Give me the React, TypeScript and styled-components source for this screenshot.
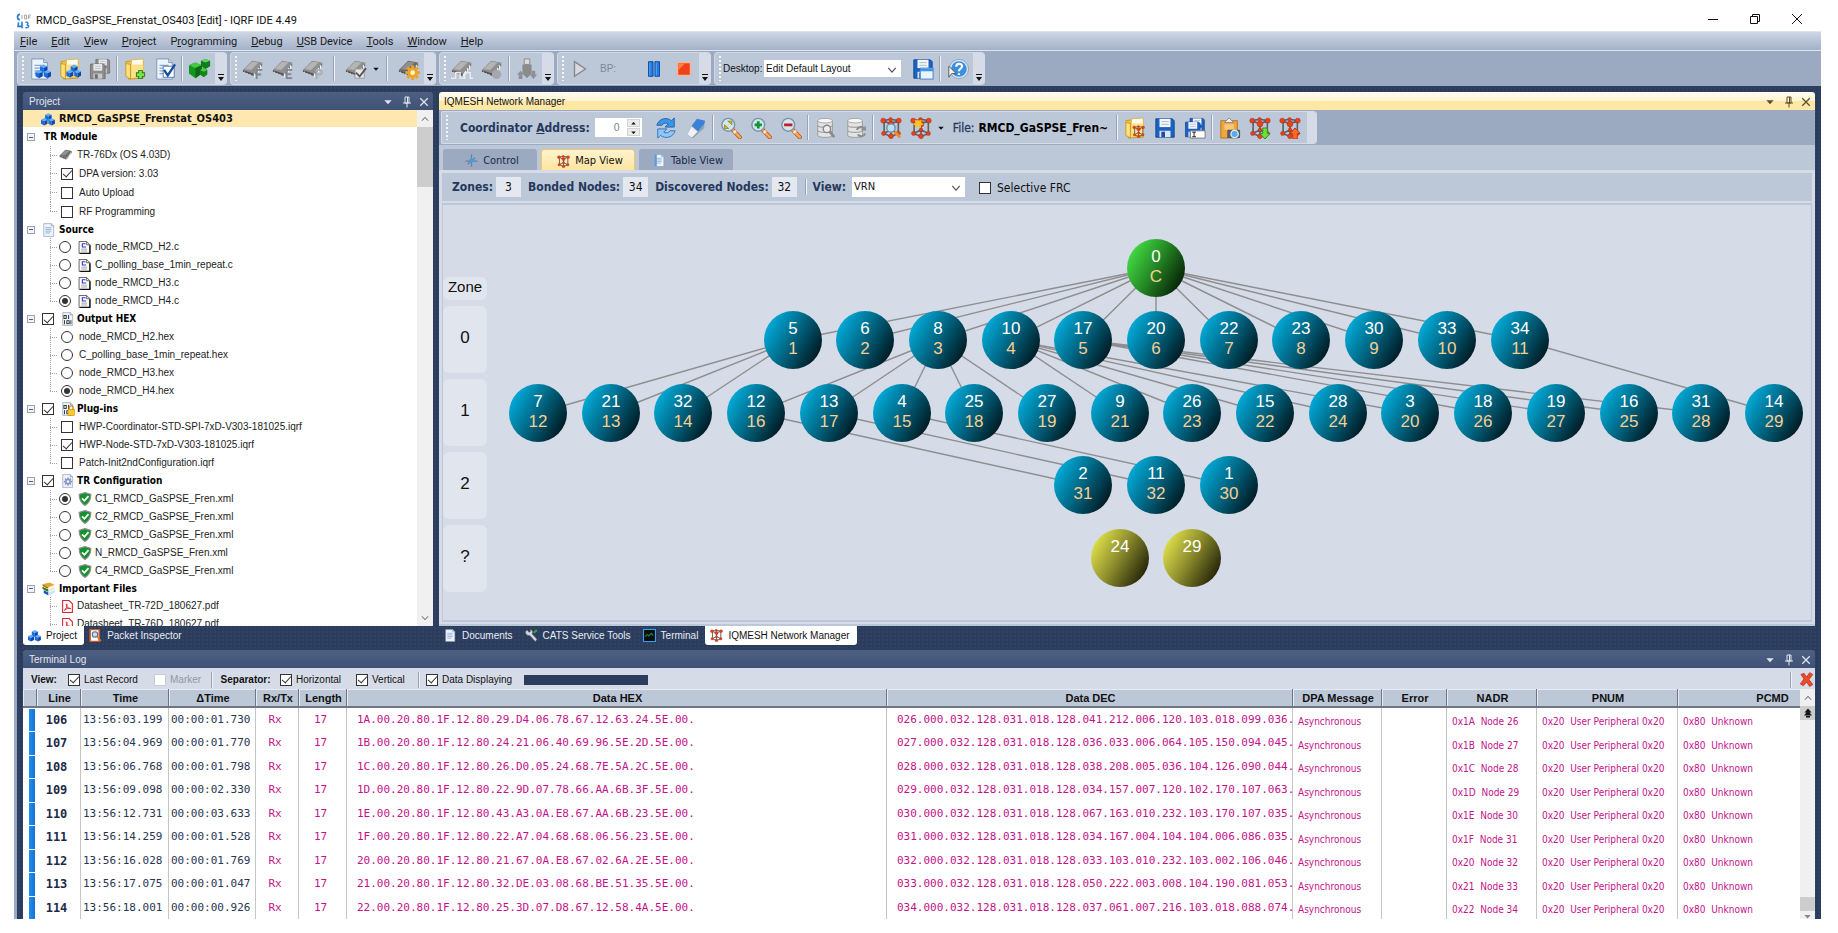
import React from 'react';
import styled, { createGlobalStyle, css } from 'styled-components';

const SANS = '"Liberation Sans", Arial, sans-serif';
const CONDENSED = '"DejaVu Sans Condensed", Tahoma, sans-serif';
const MONO = '"DejaVu Sans Mono", monospace';

const GlobalStyle = createGlobalStyle`
  * { box-sizing: border-box; }
  body { margin: 0; background: #fff; font: 10px/12px ${SANS}; color: #111; }
  button, input, select { font: inherit; color: inherit; margin: 0; }
  button { border: 0; padding: 0; background: none; }
`;

/* ------------------------------------------------------------------ icons */

const Drawing = styled.svg`flex: none;`;
type IconProps = { size?: number; children?: React.ReactNode };
const Icon = ({ size = 24, children }: IconProps) => (
  <Drawing width={size} height={size} viewBox="0 0 24 24" aria-hidden="true">{children}</Drawing>
);

const Cubes = ({ x = 0, y = 0, s = 1 }) => {
  const one = (cx: number, cy: number) => (
    <g key={`${cx}-${cy}`}>
      <path d={`M${cx} ${cy + 2}l4-2 4 2-4 2z`} fill="#5cb0fa" />
      <path d={`M${cx} ${cy + 2}l4 2v5l-4-2z`} fill="#1a6be0" />
      <path d={`M${cx + 8} ${cy + 2}l-4 2v5l4-2z`} fill="#0c47b0" />
    </g>
  );
  return <g transform={`translate(${x} ${y}) scale(${s})`}>{one(5, 0)}{one(0, 6)}{one(9, 6)}</g>;
};

const Sheet = ({ lines = false }) => (
  <g>
    <path d="M3 1h13l4 4v18H3z" fill="#eef4fb" stroke="#7d93b3" />
    <path d="M16 1v4h4" fill="#c7d6ea" stroke="#7d93b3" />
    {lines && <path d="M6 8h10M6 11h10M6 14h10M6 17h8" stroke="#8aa4cc" strokeWidth="1.4" />}
  </g>
);

const Folder = () => (
  <g>
    <path d="M2 4l7-1 2 2h10v17l-16 1z" fill="#f2c53d" stroke="#c99a1f" />
    <path d="M8 2l13-1v18l-13 3z" fill="#fffbe8" stroke="#d8b650" />
    <path d="M2 6l5 1v16l-5-3z" fill="#ffe07a" stroke="#c99a1f" />
    <path d="M8 7h13v12l-13 3z" fill="#fbe28a" />
  </g>
);

const Floppy = ({ gray = false }) => (
  <g>
    <path d="M2 2h18l2 2v18H2z" fill={gray ? '#8d8d8d' : '#1d62c0'} stroke={gray ? '#666' : '#12458e'} />
    <rect x="6" y="2" width="12" height="9" fill={gray ? '#e9e9e9' : '#f3f7fc'} />
    <path d="M8 5h8M8 8h8" stroke="#a9b6c6" />
    <rect x="6" y="15" width="12" height="7" fill={gray ? '#c9c9c9' : '#dbe7f6'} />
    <rect x="8" y="16" width="4" height="6" fill={gray ? '#6e6e6e' : '#1d4f98'} />
  </g>
);

const Chip = ({ dark = false }) => (
  <g>
    <path d="M1 13L11 3l11 2-9 12z" fill={dark ? '#6a6a6a' : '#8f8f8f'} />
    <path d="M3 12l8-8 7 1-8 8z" fill={dark ? '#909090' : '#b4b4b4'} />
    <path d="M1 13l12 4v3L1 15z" fill="#555" />
    <path d="M13 17l9-12v3l-9 12z" fill="#777" />
    <path d="M13.500 17v4M15.800 14v4.500M18 11v4.500M20.200 8v4.500" stroke="#f2f2f2" strokeWidth="1.300" />
    <path d="M3 15l-1 2M6 16.500l-1 2M9 17.500l-1 2" stroke="#cfcfcf" strokeWidth="1.200" />
  </g>
);

const Letter = ({ kind }: { kind: 'F' | 'E' | 'P' }) => (
  <g fill="none" stroke={kind === 'P' ? '#a9adb3' : '#80868f'} strokeWidth="2">
    {kind === 'F' && <path d="M16 23v-10h6M16 18h5" />}
    {kind === 'E' && <path d="M22 13h-6v9h6M16 17.500h5" />}
    {kind === 'P' && <path d="M16 23v-10h3a2.500 2.500 0 0 1 0 5h-3" />}
  </g>
);

const Magnifier = ({ mark }: { mark?: 'fit' | 'plus' | 'minus' }) => (
  <g>
    <path d="M14 14l7.500 8" stroke="#a9531b" strokeWidth="4.600" strokeLinecap="round" />
    <path d="M14 14l7.500 8" stroke="#ffa653" strokeWidth="3" strokeLinecap="round" />
    <path d="M15.500 15.500l1.500 1.500" stroke="#f4f4f4" strokeWidth="3.500" />
    <circle cx="9" cy="8.500" r="7" fill="#cfe7f3" stroke="#7f93a5" strokeWidth="1.600" />
    {mark === 'fit' && <path d="M8.500 4.500H13v4zM9.500 12.500H5v-4z" fill="#e2bd00" stroke="#8f7a00" strokeWidth=".8" />}
    {mark === 'plus' && <path d="M9 4.500v8M5 8.500h8" stroke="#16922b" strokeWidth="3" />}
    {mark === 'minus' && <path d="M4.500 8.500h9" stroke="#d0161b" strokeWidth="3" />}
  </g>
);

const Network = () => (
  <g>
    <path d="M3.500 4l8 3.500 9-3.500M4.500 4v14l7.500 3.500 8-3.500V4M12 8v13M3.500 4l8-1.500 9 1.500M4 18l8-4 8 4" stroke="#5f6267" strokeWidth="1.800" fill="none" />
    <g fill="#e8421c" stroke="#a82408" strokeWidth=".5">
      <circle cx="3.500" cy="4" r="2.700" /><circle cx="20.500" cy="4" r="2.700" /><circle cx="12" cy="7.500" r="3.200" />
      <circle cx="4" cy="18" r="2.300" /><circle cx="20" cy="18" r="2.300" /><circle cx="12" cy="21" r="2.600" />
      <circle cx="11.500" cy="2.500" r="1.900" /><circle cx="12" cy="14" r="1.900" />
    </g>
  </g>
);

const Database = ({ mode }: { mode: 'find' | 'sync' }) => (
  <g>
    <path d="M3 4v16c0 3 16 3 16 0V4z" fill="#e4e4e4" stroke="#999" />
    <ellipse cx="11" cy="4" rx="8" ry="2.500" fill="#f7f7f7" stroke="#a5a5a5" />
    <path d="M3 9c0 3 16 3 16 0M3 14.500c0 3 16 3 16 0" fill="none" stroke="#a2a2a2" strokeWidth="1.300" />
    {mode === 'find' ? (
      <g stroke="#8a8a8a"><circle cx="13" cy="13" r="4" fill="#eee" strokeWidth="1.600" /><path d="M16 16l5 6" strokeWidth="2.800" /></g>
    ) : (
      <g fill="none" stroke="#8d8d8d" strokeWidth="2.400"><path d="M13 14a4.500 4.500 0 0 1 8-1M22 18a4.500 4.500 0 0 1-8 1" /><path d="M22 10v4h-4" strokeWidth="1.600" /></g>
    )}
  </g>
);

const Shield = () => (
  <Icon size={14}>
    <path d="M12 1l10 3c0 9-3 15-10 19C5 19 2 13 2 4z" fill="#15912c" stroke="#8b8f92" strokeWidth="2" />
    <path d="M7 11l4 4 7-8" fill="none" stroke="#fff" strokeWidth="3" />
  </Icon>
);

const CFile = () => (
  <Icon size={13}>
    <path d="M2 1h14l6 6v16H2z" fill="#fff" stroke="#444" strokeWidth="1.500" />
    <path d="M22 8v15H4" fill="none" stroke="#111" strokeWidth="2.500" />
    <path d="M16 1v6h6" fill="none" stroke="#444" strokeWidth="1.500" />
    <path d="M14 5H8v6h7" fill="none" stroke="#3333c8" strokeWidth="2" />
    <path d="M6 15h11M6 18.500h11" stroke="#888" strokeWidth="1.400" />
  </Icon>
);

const Pdf = () => (
  <Icon size={13}>
    <path d="M3 1h12l6 6v16H3z" fill="#fff" stroke="#e0222a" strokeWidth="2" />
    <path d="M6 19c4-3 6-8 5-11-1-2-2 0-1 2 1 4 4 6 8 6-3-2-8 0-12 3z" fill="none" stroke="#e0222a" strokeWidth="1.800" />
  </Icon>
);

const HexFile = ({ locked = false }) => (
  <Icon size={14}>
    <Sheet />
    <g fill="none" stroke="#222" strokeWidth="1.500">
      <rect x="5" y="6" width="4" height="5" /><path d="M13 5v7M6 14v7M17 14v7" /><rect x="10" y="15" width="4" height="5" />
    </g>
    {locked && <g><rect x="12" y="13" width="11" height="10" fill="#ffc928" stroke="#c18b00" /><path d="M14 13v-3a3.500 3.500 0 0 1 7 0v3" fill="none" stroke="#c18b00" strokeWidth="1.800" /></g>}
  </Icon>
);

const gearTeeth = [0, 45, 90, 135];
const Gear = ({ cx, cy, r, fill, hole }: { cx: number; cy: number; r: number; fill: string; hole: string }) => (
  <g transform={`translate(${cx} ${cy})`}>
    {gearTeeth.map((a) => <rect key={a} x={-r / 5} y={-r} width={r / 2.5} height={r * 2} fill={fill} transform={`rotate(${a})`} />)}
    <circle r={r * 0.7} fill={fill} /><circle r={r * 0.32} fill={hole} />
  </g>
);

const Books = () => (
  <Icon size={14}>
    <path d="M1 4l12-3 9 4-11 4z" fill="#e0a72c" /><path d="M1 4l10 5v3L1 7z" fill="#a66d10" /><path d="M11 9l11-4v3l-11 4z" fill="#fff2cf" />
    <path d="M1 8l10 5v4L1 12z" fill="#2b7a2d" /><path d="M11 13l11-4v4l-11 4z" fill="#ddf0dd" />
    <path d="M3 14l8 4v5l-8-4z" fill="#1556b8" /><path d="M11 18l11-4v4l-11 5z" fill="#cfe1fb" />
  </Icon>
);

const Cross = ({ size = 10 }) => (
  <Icon size={size}><path d="M3 3l18 18M21 3L3 21" stroke="currentColor" strokeWidth="3" /></Icon>
);
const Pin = () => (
  <Icon size={12}><path d="M8 2h8v12H8zM13 2v12M4 14h16M12 14v9" fill="none" stroke="currentColor" strokeWidth="2" /></Icon>
);
const Caret = ({ size = 8 }) => (
  <Icon size={size}><path d="M1 7h22L12 19z" fill="currentColor" /></Icon>
);
const Chevron = ({ up = false, size = 10 }) => (
  <Icon size={size}><path d={up ? 'M3 17l9-10 9 10' : 'M3 7l9 10 9-10'} fill="none" stroke="#555" strokeWidth="3" /></Icon>
);

/* ----------------------------------------------------------- shared parts */

const Page = styled.div`min-height: 100vh; padding: 0 17px 14px 14px; background: #fff;`;

const TitleBar = styled.header`
  display: flex; align-items: center; height: 31px; padding: 10px 18px 0 2px; gap: 4px;
  font: 11px/20px Roboto, sans-serif;
`;
const WindowTitle = styled.h1`flex: 1; margin: 0; font-size: inherit; font-weight: 400;`;
const WindowButtons = styled.div`display: flex; gap: 30px; padding-bottom: 4px;`;
const WindowButton = styled.button`display: grid; place-items: center; width: 12px; height: 16px;`;

const MenuBar = styled.nav`
  display: flex; align-items: center; gap: 14px; height: 20px; padding: 1px 6px 0;
  background: linear-gradient(#cdd6e5, #a3b1c9); border-top: 1px solid #dde3ee; border-bottom: 1px solid #dfe5ef;
  font: 11px/18px Roboto, sans-serif;
`;
const MenuItem = styled.button`white-space: nowrap; color: #1b1b1b;`;

const ToolStrip = styled.div`
  display: flex; gap: 3px; height: 35px; padding: 1px 3px; background: #9ba9c1;
`;
const ToolGroup = styled.div`
  display: flex; align-items: center; height: 33px; overflow: hidden; padding-left: 4px;
  background: #bcc7d8; border: 1px solid #d0d8e5; border-right: 0; border-radius: 4px;
`;
const Grip = styled.span`
  flex: none; width: 3px; height: 25px;
  background: repeating-linear-gradient(#f1f4f9 0 2px, transparent 2px 4px) 0 0 / 2px 100% no-repeat;
`;
const ToolButton = styled.button<{ $narrow?: boolean }>`
  flex: none; display: grid; place-items: center; width: ${(p) => (p.$narrow ? 10 : 30)}px; height: 30px;
`;
const Separator = styled.span<{ $wide?: boolean; $tall?: number }>`
  flex: none; width: 1px; height: ${(p) => p.$tall ?? 25}px; margin: 0 ${(p) => (p.$wide ? 6 : 2)}px;
  background: #eef1f6; box-shadow: -1px 0 #97a3b8;
`;
const OverflowTab = styled.button`
  flex: none; align-self: stretch; display: flex; align-items: flex-end; justify-content: center;
  width: 12px; padding-bottom: 3px; background: #d5dbe7;
`;
const DesktopLabel = styled.label`width: 42px; padding-left: 1px; color: #111; white-space: nowrap;`;
const BreakLabel = styled.span`width: 44px; padding-left: 5px; color: #7e8796;`;
const SaveSlot = styled.span`display: flex; padding-left: 7px;`;

const SelectBox = styled.span<{ $w: number; $h: number }>`
  position: relative; flex: none; width: ${(p) => p.$w}px; height: ${(p) => p.$h}px; background: #fff;
  & > select {
    appearance: none; width: 100%; height: 100%; border: 0; border-radius: 0; background: transparent; padding: 0 2px; outline: 0;
  }
  & > svg { position: absolute; right: 4px; top: 50%; margin-top: -4px; pointer-events: none; }
`;

const Checkbox = styled.input.attrs({ type: 'checkbox' })`
  appearance: none; flex: none; display: grid; place-items: center; width: 12px; height: 12px;
  border: 1px solid #333; background: #fff;
  &:disabled { border-color: #ccc; }
  &:checked::after { content: ''; width: 4px; height: 8px; margin-top: -2px; border: solid #333; border-width: 0 1px 1px 0; transform: rotate(42deg); }
`;
const Radio = styled.input.attrs({ type: 'radio' })`
  appearance: none; flex: none; display: grid; place-items: center; width: 12px; height: 12px;
  border: 1px solid #333; border-radius: 50%; background: #fff;
  &:checked::after { content: ''; width: 6px; height: 6px; border-radius: 50%; background: #333; }
`;

const Desk = styled.main`
  padding: 6px 6px 0; border-left: 3px solid #9ba9c1; background-color: #2b3c5c;
  background-image: radial-gradient(#314466 1px, transparent 1px); background-size: 4px 4px;
`;
const Docks = styled.div`display: grid; grid-template-columns: 410px minmax(0, 1fr); gap: 6px;`;
const Dock = styled.section`display: flex; flex-direction: column; min-width: 0;`;

const Caption = styled.header<{ $active?: boolean }>`
  display: flex; align-items: center; flex: none; gap: 8px; height: 18px; padding: 1px 4px 0 6px;
  border-radius: 3px 3px 0 0;
  ${(p) => p.$active
    ? css`padding-left: 5px; background: linear-gradient(#fffcf2 0, #fff3cf 50%, #ffe8a6 50%); color: #5b4d30;`
    : css`background: linear-gradient(#4d6082, #3f5276); color: #e0e5ee;`}
`;
const CaptionTitle = styled.h2<{ $active?: boolean }>`
  flex: 1; margin: 0; font-size: 10px; font-weight: 400; color: ${(p) => (p.$active ? '#111' : 'inherit')};
`;
const CaptionButton = styled.button`display: grid; place-items: center; width: 10px; height: 16px;`;

const PanelCaption = ({ title, active }: { title: string; active?: boolean }) => (
  <Caption $active={active}>
    <CaptionTitle $active={active}>{title}</CaptionTitle>
    <CaptionButton aria-label="Panel menu"><Caret /></CaptionButton>
    <CaptionButton aria-label="Pin"><Pin /></CaptionButton>
    <CaptionButton aria-label="Close"><Cross /></CaptionButton>
  </Caption>
);

const DockTabs = styled.div`display: flex; height: 24px; align-items: flex-start;`;
const DockTab = styled.button<{ $active?: boolean }>`
  display: flex; align-items: center; gap: 5px; height: 19px; padding: 0 7px 0 5px; white-space: nowrap;
  color: ${(p) => (p.$active ? '#111' : '#e9edf5')}; background: ${(p) => (p.$active ? '#fff' : 'transparent')};
  border-radius: 0 0 3px 3px;
`;

/* ------------------------------------------------------------ main toolbar */

const Overflow = () => (
  <OverflowTab aria-label="Toolbar options">
    <svg width="6" height="7" viewBox="0 0 6 7"><path d="M0 0h6v1H0zM0 3h6L3 7z" fill="#111" /></svg>
  </OverflowTab>
);

const Tool = ({ label, children }: { label: string; children: React.ReactNode }) => (
  <ToolButton aria-label={label}><Icon size={22}>{children}</Icon></ToolButton>
);

const MainToolbars = () => (
  <ToolStrip>
    <ToolGroup>
      <Grip />
      <Tool label="New project"><Sheet lines /><Cubes x={7} y={7} s={1} /></Tool>
      <Tool label="Open project"><Folder /><Cubes x={8} y={7} s={0.95} /></Tool>
      <Tool label="Save all"><g transform="translate(6 0) scale(.75)"><Floppy gray /></g><g transform="translate(0 5) scale(.8)"><Floppy gray /></g></Tool>
      <Separator />
      <Tool label="Add file"><Folder /><path d="M18 13v10M13 18h10" stroke="#1f7a14" strokeWidth="5" /><path d="M18 14v8M14 18h8" stroke="#7be04e" strokeWidth="3" /></Tool>
      <Tool label="Check"><Sheet lines /><rect x="10" y="9" width="12" height="12" fill="#fff" stroke="#5577aa" /><path d="M11 13l4 6 8-12" fill="none" stroke="#154da0" strokeWidth="2.500" /></Tool>
      <Separator />
      <Tool label="Build">
        <path d="M13 3l5-2 5 2v6l-5 3-5-3z" fill="#0f7d19" /><path d="M13 3l5-2 5 2-5 2z" fill="#58d95c" />
        <path d="M0 8l7-3 7 3v9l-7 5-7-5z" fill="#149420" /><path d="M0 8l7-3 7 3-7 3z" fill="#3fcb45" /><path d="M14 8l-7 3v11l7-5z" fill="#0c6a14" />
        <path d="M12 13l4-2 4 2v5l-4 3-4-3z" fill="#12851b" /><path d="M12 13l4-2 4 2-4 2z" fill="#45cc4a" />
      </Tool>
      <Overflow />
    </ToolGroup>
    <ToolGroup>
      <Grip />
      <Tool label="Program flash"><Chip /><Letter kind="F" /></Tool>
      <Tool label="Program EEPROM"><Chip /><Letter kind="E" /></Tool>
      <Tool label="Program plug-in"><Chip /><Letter kind="P" /></Tool>
      <Separator $wide />
      <Tool label="Verify"><Chip /><rect x="11" y="12" width="10" height="10" fill="#e8e8e8" stroke="#999" /><path d="M12 16l4 4 7-9" fill="none" stroke="#555" strokeWidth="2" /></Tool>
      <ToolButton $narrow aria-label="Verify options"><Caret size={6} /></ToolButton>
      <Separator $wide />
      <Tool label="Configure"><Chip dark /><Gear cx={16} cy={16} r={8} fill="#eaa42a" hole="#fff3c8" /></Tool>
      <Overflow />
    </ToolGroup>
    <ToolGroup>
      <Grip />
      <Tool label="Signal"><Chip /><path d="M0 22h5v-6h5v6h5v-6h6v6h3" fill="none" stroke="#e8eaee" strokeWidth="1.600" /></Tool>
      <Tool label="Record"><Chip /><circle cx="17" cy="18" r="5" fill="#a4a7ac" /></Tool>
      <Separator />
      <Tool label="USB"><path d="M9 1h6v6H9z" fill="#dcdcdc" stroke="#8a8a8a" /><path d="M7 7h10v10l-5 5-5-5z" fill="#8b8b8b" /><path d="M1 18l4-4 4 4H7v5H3v-5zM23 18l-4 5-4-5h2v-4h4v4z" fill="#8d9096" /></Tool>
      <Overflow />
    </ToolGroup>
    <ToolGroup>
      <Grip />
      <Tool label="Run"><path d="M6 4l12 8-12 8z" fill="#d7d9dd" stroke="#84888f" strokeWidth="1.500" /></Tool>
      <BreakLabel>BP:</BreakLabel>
      <Tool label="Pause"><path d="M6 4h5v16H6zM13 4h5v16h-5z" fill="#1f7be0" stroke="#0d4aa3" /><path d="M7 5h1v14H7zM14 5h1v14h-1z" fill="#5eaaf3" /></Tool>
      <Tool label="Stop"><path d="M5 5h14v14H5z" fill="#f0401c" stroke="#fbb38c" strokeWidth="1.500" /><path d="M6 13L13 6H6z" fill="#ff8046" /></Tool>
      <Overflow />
    </ToolGroup>
    <ToolGroup>
      <Grip />
      <DesktopLabel htmlFor="desktop">Desktop:</DesktopLabel>
      <SelectBox $w={137} $h={17}>
        <select id="desktop"><option>Edit Default Layout</option></select>
        <Chevron />
      </SelectBox>
      <SaveSlot><Tool label="Save layout"><Floppy /><rect x="9" y="11" width="14" height="12" fill="#eaf4ff" stroke="#3d7dc7" /><path d="M9 13h14" stroke="#3d94e8" strokeWidth="3" /></Tool></SaveSlot>
      <Separator />
      <Tool label="Help"><circle cx="13" cy="12" r="10.500" fill="#dbe7f3" stroke="#8fa3b8" /><circle cx="13" cy="12" r="8.500" fill="#3c8fdd" /><path d="M10 9.500c0-4 6.500-4 6.500-.5 0 2.500-3.500 2.500-3.500 5.500M13 16.500v2" fill="none" stroke="#fff" strokeWidth="2.300" /><path d="M2 9v12l3-4h5z" fill="#f6f6f6" stroke="#555" /></Tool>
      <Overflow />
    </ToolGroup>
  </ToolStrip>
);

/* ------------------------------------------------------------ project tree */

const TreeArea = styled.div`display: flex; flex: 1 1 0; min-height: 0; overflow: hidden; background: #fff;`;
const Tree = styled.div`flex: 1; min-width: 0; overflow: hidden; color: #222;`;
const RootRow = styled.div`
  display: flex; align-items: center; gap: 4px; height: 18px; padding-left: 18px; border-bottom: 1px solid #fff;
  background: #ffe8b0; color: #111; font: bold 11px/16px ${CONDENSED};
`;
const GroupRow = styled.div<{ $tall?: boolean }>`
  display: flex; align-items: center; height: ${(p) => (p.$tall ? 18 : 17)}px; padding-left: 4px; color: #000;
  font: bold 10px/14px ${CONDENSED};
`;
const Expander = styled.button`
  flex: none; width: 8px; height: 8px; border: 1px solid #9aa3b2; background: linear-gradient(#4a5a90, #4a5a90) center / 4px 1px no-repeat #f4f4f4;
  margin-right: 7px;
`;
const Slot = styled.span<{ $w: number }>`flex: none; display: flex; align-items: center; width: ${(p) => p.$w}px;`;
const dots = (dir: string) => `repeating-linear-gradient(${dir}, #a0a0a0 0 1px, transparent 1px 2px)`;
const Branch = styled.span<{ $last?: boolean; $w: number }>`
  flex: none; align-self: stretch; width: ${(p) => p.$w}px; margin-left: 27px;
  background: ${dots('to bottom')} 0 0 / 1px ${(p) => (p.$last ? '50%' : '100%')} no-repeat,
    ${dots('to right')} 0 50% / 8px 1px no-repeat;
`;
const TreeItem = styled.label<{ $tall?: boolean }>`
  display: flex; align-items: center; height: ${(p) => (p.$tall ? 19 : 18)}px; white-space: nowrap;
`;
const ScrollTrack = styled.div<{ $w: number }>`
  flex: none; display: flex; flex-direction: column; align-items: center; width: ${(p) => p.$w}px; background: #f0f0f0;
`;
const ScrollArrow = styled.button`flex: none; display: grid; place-items: center; width: 100%; height: 17px;`;
const ScrollThumb = styled.div<{ $h: number }>`
  display: grid; place-items: center; width: 100%; height: ${(p) => p.$h}px; background: #cdcdcd;
`;
const Spacer = styled.span`flex: 1;`;

type Item = { text: string; on?: boolean };
type ItemListProps = { name: string; items: Item[]; kind: 'radio' | 'check'; icon?: React.ReactNode; tall?: boolean };
const ItemList = ({ name, items, kind, icon, tall }: ItemListProps) => (
  <>
    {items.map((it, i) => (
      <TreeItem key={it.text} $tall={tall}>
        <Branch $w={icon ? 9 : 11} $last={i === items.length - 1} />
        <Slot $w={icon ? 19 : 18}>
          {kind === 'radio' ? <Radio name={name} defaultChecked={it.on} /> : <Checkbox defaultChecked={it.on} />}
        </Slot>
        {icon && <Slot $w={17}>{icon}</Slot>}
        {it.text}
      </TreeItem>
    ))}
  </>
);

const sources: Item[] = [{ text: 'node_RMCD_H2.c' }, { text: 'C_polling_base_1min_repeat.c' }, { text: 'node_RMCD_H3.c' }, { text: 'node_RMCD_H4.c', on: true }];
const hexes: Item[] = [{ text: 'node_RMCD_H2.hex' }, { text: 'C_polling_base_1min_repeat.hex' }, { text: 'node_RMCD_H3.hex' }, { text: 'node_RMCD_H4.hex', on: true }];
const plugins: Item[] = [{ text: 'HWP-Coordinator-STD-SPI-7xD-V303-181025.iqrf' }, { text: 'HWP-Node-STD-7xD-V303-181025.iqrf', on: true }, { text: 'Patch-Init2ndConfiguration.iqrf' }];
const configs: Item[] = [{ text: 'C1_RMCD_GaSPSE_Fren.xml', on: true }, { text: 'C2_RMCD_GaSPSE_Fren.xml' }, { text: 'C3_RMCD_GaSPSE_Fren.xml' }, { text: 'N_RMCD_GaSPSE_Fren.xml' }, { text: 'C4_RMCD_GaSPSE_Fren.xml' }];
const docs = ['Datasheet_TR-72D_180627.pdf', 'Datasheet_TR-76D_180627.pdf'];

const CheckedGroup = ({ title, icon }: { title: string; icon: React.ReactNode }) => (
  <GroupRow $tall>
    <Expander aria-label={`Collapse ${title}`} />
    <Slot $w={19}><Checkbox defaultChecked aria-label={title} /></Slot>
    <Slot $w={16}>{icon}</Slot>
    {title}
  </GroupRow>
);

const ProjectPanel = () => (
  <Dock>
    <PanelCaption title="Project" />
    <TreeArea>
      <Tree>
        <RootRow><Icon size={14}><Cubes x={0} y={2} s={1.4} /></Icon>RMCD_GaSPSE_Frenstat_OS403</RootRow>
        <GroupRow $tall><Expander aria-label="Collapse TR Module" /><Slot $w={2} />TR Module</GroupRow>
        <TreeItem as="div"><Branch $w={9} /><Slot $w={18}><Icon size={14}><Chip dark /></Icon></Slot>TR-76Dx (OS 4.03D)</TreeItem>
        <ItemList name="module" kind="check" tall items={[{ text: 'DPA version: 3.03', on: true }, { text: 'Auto Upload' }, { text: 'RF Programming' }]} />
        <GroupRow><Expander aria-label="Collapse Source" /><Slot $w={17}><Icon size={14}><Sheet lines /></Icon></Slot>Source</GroupRow>
        <ItemList name="source" kind="radio" icon={<CFile />} items={sources} />
        <CheckedGroup title="Output HEX" icon={<HexFile />} />
        <ItemList name="hex" kind="radio" items={hexes} />
        <CheckedGroup title="Plug-ins" icon={<HexFile locked />} />
        <ItemList name="plugin" kind="check" items={plugins} />
        <CheckedGroup title="TR Configuration" icon={<Icon size={14}><Sheet /><Gear cx={12} cy={13} r={7} fill="#8b93c4" hole="#eef4fb" /></Icon>} />
        <ItemList name="config" kind="radio" icon={<Shield />} items={configs} />
        <GroupRow><Expander aria-label="Collapse Important Files" /><Slot $w={17}><Books /></Slot>Important Files</GroupRow>
        {docs.map((d) => (
          <TreeItem as="div" key={d}><Branch $w={11} /><Slot $w={16}><Pdf /></Slot>{d}</TreeItem>
        ))}
      </Tree>
      <ScrollTrack $w={16}>
        <ScrollArrow aria-label="Scroll up"><Chevron up size={8} /></ScrollArrow>
        <ScrollThumb $h={60} />
        <Spacer />
        <ScrollArrow aria-label="Scroll down"><Chevron size={8} /></ScrollArrow>
      </ScrollTrack>
    </TreeArea>
    <DockTabs>
      <DockTab $active><Icon size={13}><Cubes x={0} y={2} s={1.4} /></Icon>Project</DockTab>
      <DockTab>
        <Icon size={13}><path d="M2 1h17v22H2z" fill="#fff" stroke="#c8592b" strokeWidth="3" /><circle cx="11" cy="10" r="5" fill="#bfe0f5" stroke="#54708c" strokeWidth="2" /><path d="M15 14l7 8" stroke="#d87428" strokeWidth="3" /></Icon>
        Packet Inspector
      </DockTab>
    </DockTabs>
  </Dock>
);

/* --------------------------------------------------------- network manager */

const NetStrip = styled.div`display: flex; height: 35px; padding: 1px 2px; background: #9ba9c1;`;
const NetGroup = styled(ToolGroup)`border-radius: 2px 4px 4px 2px; border-color: #d5dbe7;`;
const NetEnd = styled.span`align-self: stretch; width: 10px; margin-left: 2px; background: #d5dbe7;`;
const FieldLabel = styled.label`color: #24385c; font: bold 12px/20px ${CONDENSED}; white-space: nowrap;`;
const AddressLabel = styled(FieldLabel)`padding: 0 5px 0 11px;`;
const Spin = styled.span`
  display: flex; flex: none; width: 47px; height: 19px; margin-right: 9px; background: #fff; padding: 1px;
  & > input { width: 31px; border: 0; padding: 0 7px 0 0; text-align: right; background: none; color: #888; font: 11px/16px ${CONDENSED}; outline: 0; }
`;
const SpinArrows = styled.span`display: grid; width: 13px; gap: 1px;`;
const SpinButton = styled.button<{ $down?: boolean }>`
  display: grid; place-items: center; background: #ececec; border: 1px solid #d4d4d4;
  & > svg { transform: rotate(${(p) => (p.$down ? 0 : 180)}deg); }
`;
const FileName = styled.output`padding-right: 7px; margin-left: 4px; color: #000; font: bold 12px/20px ${CONDENSED};`;
const FileLabel = styled(FieldLabel)`padding-left: 7px; font-weight: 400; -webkit-text-stroke: 0.3px;`;

const ViewTabs = styled.div`display: flex; align-items: flex-end; gap: 4px; height: 25px; padding-left: 4px; background: #bcc7d8;`;
const ViewTab = styled.button<{ $active?: boolean }>`
  display: flex; align-items: center; justify-content: center; gap: 5px; width: 94px; height: 21px; padding: 2px 0 0 4px; color: #1c2a44;
  font: 11px/18px ${CONDENSED}; border-radius: 3px 3px 0 0; background: #9ba9c1;
  ${(p) => p.$active && css`background: linear-gradient(#fff3cf, #ffe4a0); border: 1px solid #f3c765; border-bottom: 0; color: #111;`}
`;
const TabPage = styled.div`padding: 3px 3px 2px; background: #d5dbe7; border-bottom: 2px solid #bcc7d8;`;
const InfoBar = styled.div`
  display: flex; align-items: center; height: 28px; margin-bottom: 2px; padding-left: 10px; background: #bcc7d8;
`;
const Count = styled.output`
  width: 25px; height: 20px; margin: 0 7px 0 3px; background: #e4e8f0; color: #111; text-align: center; font: 12px/20px ${CONDENSED};
`;
const ViewSelect = styled(SelectBox)`margin: 0 14px 0 6px; font: 11px/18px ${CONDENSED};`;
const FrcLabel = styled.label`display: flex; align-items: center; gap: 6px; padding-top: 2px; font: 12px/20px ${CONDENSED};`;

const MapFrame = styled.div`display: flex; height: 419px; border: 2px solid #bcc7d8; border-width: 2px 1px;`;
const ZoneColumn = styled.div`display: flex; flex-direction: column; gap: 6px; flex: none; width: 44px; padding-top: 72px; margin-right: 12px;`;
const ZoneCell = styled.div<{ $head?: boolean }>`
  display: grid; place-items: center; flex: none; height: ${(p) => (p.$head ? 23 : 67)}px; padding-bottom: 3px; border-radius: 6px; background: #e1e5ee;
  color: #111; font: ${(p) => (p.$head ? 15 : 17)}px/20px ${SANS};
`;
const Stage = styled.div`flex: 1; min-width: 0; display: flex; justify-content: center; overflow: hidden;`;
const Diagram = styled.div`position: relative; flex: none; width: 1310px; height: 415px;`;
const Links = styled.svg`position: absolute; inset: 0;`;
const fills = {
  blue: 'linear-gradient(120deg, #02b2e2 8%, #006d8c 45%, #00161d 90%)',
  green: 'linear-gradient(120deg, #47e247 8%, #279027 45%, #061c06 90%)',
  olive: 'linear-gradient(120deg, #e6e64c 8%, #93932f 45%, #1f1f08 90%)',
};
const NodeBall = styled.div<{ $tone: keyof typeof fills }>`
  position: absolute; width: 58px; height: 58px; margin: -29px 0 0 -29px; padding-top: 8px; border-radius: 50%;
  background: ${(p) => fills[p.$tone]}; color: #fff; text-align: center; font: 17px/20px ${SANS};
`;
const Vrn = styled.div`color: #f7cf93;`;

type MapNode = { id: number; vrn?: string; x: number; y: number; tone: keyof typeof fills };
const PITCH = 72.7;
const place = (rows: [number, string?][], y: number, tone: keyof typeof fills = 'blue'): MapNode[] =>
  rows.map(([id, vrn], i) => ({ id, vrn, y, tone, x: Math.round(656 + (i - (rows.length - 1) / 2) * PITCH) }));

const nodes: MapNode[] = [
  ...place([[0, 'C']], 63, 'green'),
  ...place([[5, '1'], [6, '2'], [8, '3'], [10, '4'], [17, '5'], [20, '6'], [22, '7'], [23, '8'], [30, '9'], [33, '10'], [34, '11']], 135),
  ...place([[7, '12'], [21, '13'], [32, '14'], [12, '16'], [13, '17'], [4, '15'], [25, '18'], [27, '19'], [9, '21'], [26, '23'],
    [15, '22'], [28, '24'], [3, '20'], [18, '26'], [19, '27'], [16, '25'], [31, '28'], [14, '29']], 208),
  ...place([[2, '31'], [11, '32'], [1, '30']], 280),
  ...place([[24], [29]], 353, 'olive'),
];
const children: Record<number, number[]> = {
  0: [5, 6, 8, 10, 17, 20, 22, 23, 30, 33, 34],
  5: [7, 21, 32],
  8: [12, 13, 4, 25, 27],
  10: [9, 26, 15, 28, 3],
  17: [18, 19, 16, 31],
  34: [14],
  12: [2],
  13: [11],
  4: [1],
};
const byId = new Map(nodes.map((n) => [n.id, n]));

const NetworkMap = () => (
  <Diagram>
    <Links width="1310" height="415">
      {Object.entries(children).flatMap(([from, targets]) =>
        targets.map((to) => {
          const a = byId.get(Number(from))!;
          const b = byId.get(to)!;
          return <line key={`${from}-${to}`} x1={a.x} y1={a.y} x2={b.x} y2={b.y} stroke="#8e8e90" strokeWidth="1.400" />;
        }))}
    </Links>
    {nodes.map((n) => (
      <NodeBall key={n.id} $tone={n.tone} style={{ left: n.x, top: n.y }}>
        {n.id}
        {n.vrn && <Vrn>{n.vrn}</Vrn>}
      </NodeBall>
    ))}
  </Diagram>
);

const NetworkPanel = () => (
  <Dock>
    <PanelCaption title="IQMESH Network Manager" active />
    <NetStrip>
      <NetGroup>
        <Grip />
        <AddressLabel htmlFor="address">Coordinator <u>A</u>ddress:</AddressLabel>
        <Spin>
          <input id="address" defaultValue="0" />
          <SpinArrows>
            <SpinButton aria-label="Increase"><Caret size={5} /></SpinButton>
            <SpinButton aria-label="Decrease" $down><Caret size={5} /></SpinButton>
          </SpinArrows>
        </Spin>
        <Tool label="Refresh">
          <path d="M2 9a10 10 0 0 1 16-5l3-3v10H11l3.500-3.500a5 5 0 0 0-7 1.500z" fill="#3b97e6" stroke="#1c60ae" />
          <path d="M22 15a10 10 0 0 1-16 5l-3 3V13h10l-3.500 3.500a5 5 0 0 0 7-1.500z" fill="#8fc8f7" stroke="#2a72bf" />
        </Tool>
        <Tool label="Clear"><path d="M13 2l9 2-1 4-7 8-7-6z" fill="#3a82d8" /><path d="M7 10l7 6-6 7-6-4z" fill="#eef1f5" stroke="#b3bcc9" /><path d="M14 16l7-8v4L9 23H7z" fill="#93a1b5" /></Tool>
        <Separator />
        <Tool label="Zoom to fit"><Magnifier mark="fit" /></Tool>
        <Tool label="Zoom in"><Magnifier mark="plus" /></Tool>
        <Tool label="Zoom out"><Magnifier mark="minus" /></Tool>
        <Separator />
        <Tool label="Find data"><Database mode="find" /></Tool>
        <Tool label="Sync data"><Database mode="sync" /></Tool>
        <Separator />
        <Tool label="Discover"><Network /><circle cx="12" cy="12" r="4.500" fill="#b8e2fa" stroke="#6c8ea8" strokeWidth="1.500" /><path d="M16 16l6 6" stroke="#f08a2c" strokeWidth="3" /></Tool>
        <Tool label="Mesh map"><Network /><path d="M8 1l1.500 3 3.500-1-1 3 3 2-3 1v3l-3-2-3 2V9L3 8l3-2-1-3 3 1z" fill="#ffc21f" /></Tool>
        <ToolButton $narrow aria-label="Mesh options"><Caret size={6} /></ToolButton>
        <FileLabel as="span">File:</FileLabel>
        <FileName>RMCD_GaSPSE_Fren~</FileName>
        <Separator />
        <Tool label="Open map"><Folder /><g transform="translate(9 9) scale(.58)"><Network /></g></Tool>
        <Tool label="Save map"><Floppy /></Tool>
        <Tool label="Save map as"><g transform="translate(5 0) scale(.78)"><Floppy /></g><g transform="translate(0 4) scale(.8)"><Floppy /></g><path d="M7 15h16v8H7z" fill="#fff" stroke="#777" /><path d="M9 16.500h4M9 21.500h4M11 16.500v5" stroke="#111" /></Tool>
        <Separator />
        <Tool label="Snapshot"><path d="M2 4h18v19H2z" fill="#f0a63c" stroke="#b87316" /><path d="M6 6l5-5 5 5z" fill="#eee" stroke="#888" /><path d="M6 8h10v6H6z" fill="#f8c77c" /><rect x="9" y="14" width="14" height="9" rx="1" fill="#555b66" /><circle cx="17" cy="18.500" r="4" fill="#5ca9ee" stroke="#d8e9f8" strokeWidth="1.500" /></Tool>
        <Tool label="Download"><Network /><path d="M15 12h5v6h3l-5.500 6L12 18h3z" fill="#6fdf3c" stroke="#2b8c14" /></Tool>
        <Tool label="Upload"><Network /><path d="M15 24h5v-6h3l-5.500-6L12 18h3z" fill="#ff6a2c" stroke="#c23508" /></Tool>
        <NetEnd />
      </NetGroup>
    </NetStrip>
    <ViewTabs role="tablist">
      <ViewTab role="tab"><Icon size={13}><path d="M12 1v22M1 13h22M5 19l14-12" stroke="#6a7f9c" strokeWidth="2.200" /><circle cx="12" cy="12" r="4" fill="#3aa0ee" /></Icon>Control</ViewTab>
      <ViewTab role="tab" $active><Icon size={13}><Network /></Icon>Map View</ViewTab>
      <ViewTab role="tab"><Icon size={13}><Sheet lines /><path d="M3 1h4v22H3z" fill="#5b9be0" /></Icon>Table View</ViewTab>
    </ViewTabs>
    <TabPage>
      <InfoBar>
        <FieldLabel as="span">Zones:</FieldLabel><Count>3</Count>
        <FieldLabel as="span">Bonded Nodes:</FieldLabel><Count>34</Count>
        <FieldLabel as="span">Discovered Nodes:</FieldLabel><Count>32</Count>
        <Separator $tall={16} />
        <FieldLabel htmlFor="view">&nbsp;View:</FieldLabel>
        <ViewSelect $w={113} $h={20}>
          <select id="view"><option>VRN</option></select>
          <Chevron />
        </ViewSelect>
        <FrcLabel><Checkbox />Selective FRC</FrcLabel>
      </InfoBar>
      <MapFrame>
        <ZoneColumn>
          <ZoneCell $head>Zone</ZoneCell>
          {['0', '1', '2', '?'].map((z) => <ZoneCell key={z}>{z}</ZoneCell>)}
        </ZoneColumn>
        <Stage><NetworkMap /></Stage>
      </MapFrame>
    </TabPage>
    <DockTabs>
      <DockTab><Icon size={13}><Sheet lines /></Icon>Documents</DockTab>
      <DockTab><Icon size={13}><path d="M4 2l3 4 3-1V1c4 1 5 5 3 8l9 10-3 4L9 12C4 13 1 9 1 5z" fill="#d4d8de" stroke="#69727f" /><path d="M16 7l6-5" stroke="#3da13a" strokeWidth="4" /></Icon>CATS Service Tools</DockTab>
      <DockTab><Icon size={13}><path d="M1 1h22v22H1z" fill="#0b0f10" stroke="#3aa0f5" strokeWidth="2" /><path d="M4 14l4-4 3 3 4-5 4 4" fill="none" stroke="#1f8a2b" strokeWidth="2" /></Icon>Terminal</DockTab>
      <DockTab $active><Icon size={13}><Network /></Icon>IQMESH Network Manager</DockTab>
    </DockTabs>
  </Dock>
);

/* ------------------------------------------------------------ terminal log */

const LogBar = styled.div`
  display: flex; align-items: center; height: 21px; padding: 2px 1px 0 8px; background: #d5dbe7;
`;
const LogTitle = styled.b<{ $w: number }>`flex: none; width: ${(p) => p.$w}px;`;
const LogCheck = styled.label<{ $w: number; $off?: boolean }>`
  display: flex; align-items: center; gap: 4px; flex: none; width: ${(p) => p.$w}px; white-space: nowrap;
  color: ${(p) => (p.$off ? '#9298a3' : '#111')};
`;
const Gauge = styled.span`width: 124px; height: 10px; background: #2b3c5c;`;
const ClearButton = styled.button`display: grid; place-items: center; width: 16px; height: 18px;`;

const LogArea = styled.div`display: flex; height: 230px; overflow: hidden; background: #fff;`;
const LogViewport = styled.div`flex: 1; min-width: 0; overflow: hidden;`;
const LogTable = styled.table`
  width: calc(100% + 66px); table-layout: fixed; border-collapse: separate; border-spacing: 0; color: #c4128a;
`;
const Th = styled.th`
  height: 19px; padding: 0 0 0 2px; background: #bcc7d8; color: #111; font: bold 11px/16px ${SANS};
  border: solid #6f7785; border-width: 0 1px 2px 0; box-shadow: inset 1px 1px #e6ebf3; overflow: hidden; white-space: nowrap;
`;
const Tr = styled.tr`height: 23px; &:nth-child(even) { height: 24px; }`;
const Td = styled.td<{ $kind?: 'time' | 'mid' | 'line' | 'data' }>`
  padding: 5px 0 0 5px; border-right: 1px solid #c6c6c6; white-space: pre; overflow: hidden; font: 10px/16px ${CONDENSED};
  ${(p) => p.$kind && css`padding: 0 0 0 2px; font: 11px/16px ${MONO};`}
  ${(p) => p.$kind === 'time' && css`color: #2a3550;`}
  ${(p) => p.$kind === 'mid' && css`text-align: center; padding-right: 6px;`}
  ${(p) => p.$kind === 'line' && css`text-align: center; color: #1d2a47; font: bold 12px/16px ${MONO}; padding-right: 6px;`}
  ${(p) => p.$kind === 'data' && css`padding-left: 10px;`}
`;
const Marker = styled.td`padding: 0; background: linear-gradient(90deg, #1f8ff0, #1573d6) 6px 1px / 6px calc(100% - 1px) no-repeat;`;
const ScrollFoot = styled.button`height: 8px; color: #888;`;

const cols = [14, 44, 88, 87, 43, 48, 0, 406, 89, 65, 90, 141, 188];
const heads = ['', 'Line', 'Time', 'ΔTime', 'Rx/Tx', 'Length', 'Data HEX', 'Data DEC', 'DPA Message', 'Error', 'NADR', 'PNUM', 'PCMD'];
const records: [string, string, string, string][] = [
  ['106', '13:56:03.199', '00:00:01.730', '1A.00.20.80.1F.12.80.29.D4.06.78.67.12.63.24.5E.00.'],
  ['107', '13:56:04.969', '00:00:01.770', '1B.00.20.80.1F.12.80.24.21.06.40.69.96.5E.2D.5E.00.'],
  ['108', '13:56:06.768', '00:00:01.798', '1C.00.20.80.1F.12.80.26.D0.05.24.68.7E.5A.2C.5E.00.'],
  ['109', '13:56:09.098', '00:00:02.330', '1D.00.20.80.1F.12.80.22.9D.07.78.66.AA.6B.3F.5E.00.'],
  ['110', '13:56:12.731', '00:00:03.633', '1E.00.20.80.1F.12.80.43.A3.0A.E8.67.AA.6B.23.5E.00.'],
  ['111', '13:56:14.259', '00:00:01.528', '1F.00.20.80.1F.12.80.22.A7.04.68.68.06.56.23.5E.00.'],
  ['112', '13:56:16.028', '00:00:01.769', '20.00.20.80.1F.12.80.21.67.0A.E8.67.02.6A.2E.5E.00.'],
  ['113', '13:56:17.075', '00:00:01.047', '21.00.20.80.1F.12.80.32.DE.03.08.68.BE.51.35.5E.00.'],
  ['114', '13:56:18.001', '00:00:00.926', '22.00.20.80.1F.12.80.25.3D.07.D8.67.12.58.4A.5E.00.'],
];
/* The decimal column lists the same bytes and shows only the first fifteen. */
const toDecimal = (hex: string) =>
  hex.split('.').slice(0, 15).map((b) => `${String(parseInt(b, 16)).padStart(3, '0')}.`).join('');

const TerminalLog = () => (
  <Dock>
    <PanelCaption title="Terminal Log" />
    <LogBar>
      <LogTitle $w={37}>View:</LogTitle>
      <LogCheck $w={86}><Checkbox defaultChecked />Last Record</LogCheck>
      <LogCheck $w={56} $off><Checkbox disabled />Marker</LogCheck>
      <Separator $tall={16} />
      <LogTitle $w={65}>&nbsp; Separator:</LogTitle>
      <LogCheck $w={76}><Checkbox defaultChecked />Horizontal</LogCheck>
      <LogCheck $w={57}><Checkbox defaultChecked />Vertical</LogCheck>
      <Separator $tall={16} $wide />
      <LogCheck $w={98}><Checkbox defaultChecked />Data Displaying</LogCheck>
      <Gauge />
      <Spacer />
      <Separator $tall={16} $wide />
      <ClearButton aria-label="Clear log"><Icon size={15}><path d="M3 4l5-2 4 6 5-7 5 3-6 8 6 8-5 3-5-7-5 6-5-3 6-8z" fill="#ef4a24" stroke="#a81e06" /></Icon></ClearButton>
    </LogBar>
    <LogArea>
      <LogViewport>
        <LogTable>
          <colgroup>{cols.map((w, i) => <col key={i} width={w || undefined} />)}</colgroup>
          <thead><tr>{heads.map((h, i) => <Th key={i} scope="col">{h}</Th>)}</tr></thead>
          <tbody>
            {records.map(([line, time, delta, hex]) => {
              const addr = hex.slice(0, 2);
              return (
                <Tr key={line}>
                  <Marker />
                  <Td $kind="line">{line}</Td>
                  <Td $kind="time">{time}</Td>
                  <Td $kind="time">{delta}</Td>
                  <Td $kind="mid">Rx</Td>
                  <Td $kind="mid">17</Td>
                  <Td $kind="data">{hex}</Td>
                  <Td $kind="data">{toDecimal(hex)}</Td>
                  <Td>Asynchronous</Td>
                  <Td />
                  <Td>{`0x${addr}  Node ${parseInt(addr, 16)}`}</Td>
                  <Td>{'0x20  User Peripheral 0x20'}</Td>
                  <Td>{'0x80  Unknown'}</Td>
                </Tr>
              );
            })}
          </tbody>
        </LogTable>
      </LogViewport>
      <ScrollTrack $w={15}>
        <ScrollArrow aria-label="Scroll up"><Chevron up size={8} /></ScrollArrow>
        <ScrollThumb $h={14}><Icon size={12}><path d="M12 3l7 8h-4l5 6H4l5-6H5zM8 18h8v3H8z" fill="#111" /></Icon></ScrollThumb>
        <Spacer />
        <ScrollThumb $h={14} />
        <ScrollFoot aria-label="Scroll down"><Caret size={7} /></ScrollFoot>
      </ScrollTrack>
    </LogArea>
  </Dock>
);

/* -------------------------------------------------------------------- app */

/* Each menu title with the index of its underlined access key. */
const menus: [string, number][] = [['File', 0], ['Edit', 0], ['View', 0], ['Project', 0], ['Programming', 1], ['Debug', 0], ['USB Device', 0], ['Tools', 0], ['Window', 0], ['Help', 0]];

export default function App() {
  return (
    <Page>
      <GlobalStyle />
      <TitleBar>
        <Icon size={16}>
          <path d="M6 2c-5 0-5 8 0 8M4 14l-1 6h6M9 13v10" fill="none" stroke="#2a7fd4" strokeWidth="2.500" />
          <path d="M9 3v6M13 3h3v6h-3zM22 3h-3v6M19 6h3" fill="none" stroke="#a5a5a5" strokeWidth="1.500" />
          <path d="M14 14c5-1 5 3 2 4 5 0 4 5-2 4" fill="none" stroke="#2a7fd4" strokeWidth="2" />
        </Icon>
        <WindowTitle>RMCD_GaSPSE_Frenstat_OS403 [Edit] - IQRF IDE 4.49</WindowTitle>
        <WindowButtons>
          <WindowButton aria-label="Minimize"><svg width="10" height="10"><path d="M0 5.500h10" stroke="#111" /></svg></WindowButton>
          <WindowButton aria-label="Restore"><svg width="10" height="10"><path d="M.5 2.500h7v7h-7zM2.500 2.500v-2h7v7h-2" fill="none" stroke="#111" /></svg></WindowButton>
          <WindowButton aria-label="Close"><svg width="10" height="10"><path d="M0 0l10 10M10 0L0 10" stroke="#111" /></svg></WindowButton>
        </WindowButtons>
      </TitleBar>
      <MenuBar>
        {menus.map(([label, key]) => (
          <MenuItem key={label}>{label.slice(0, key)}<u>{label[key]}</u>{label.slice(key + 1)}</MenuItem>
        ))}
      </MenuBar>
      <MainToolbars />
      <Desk>
        <Docks>
          <ProjectPanel />
          <NetworkPanel />
        </Docks>
        <TerminalLog />
      </Desk>
    </Page>
  );
}
